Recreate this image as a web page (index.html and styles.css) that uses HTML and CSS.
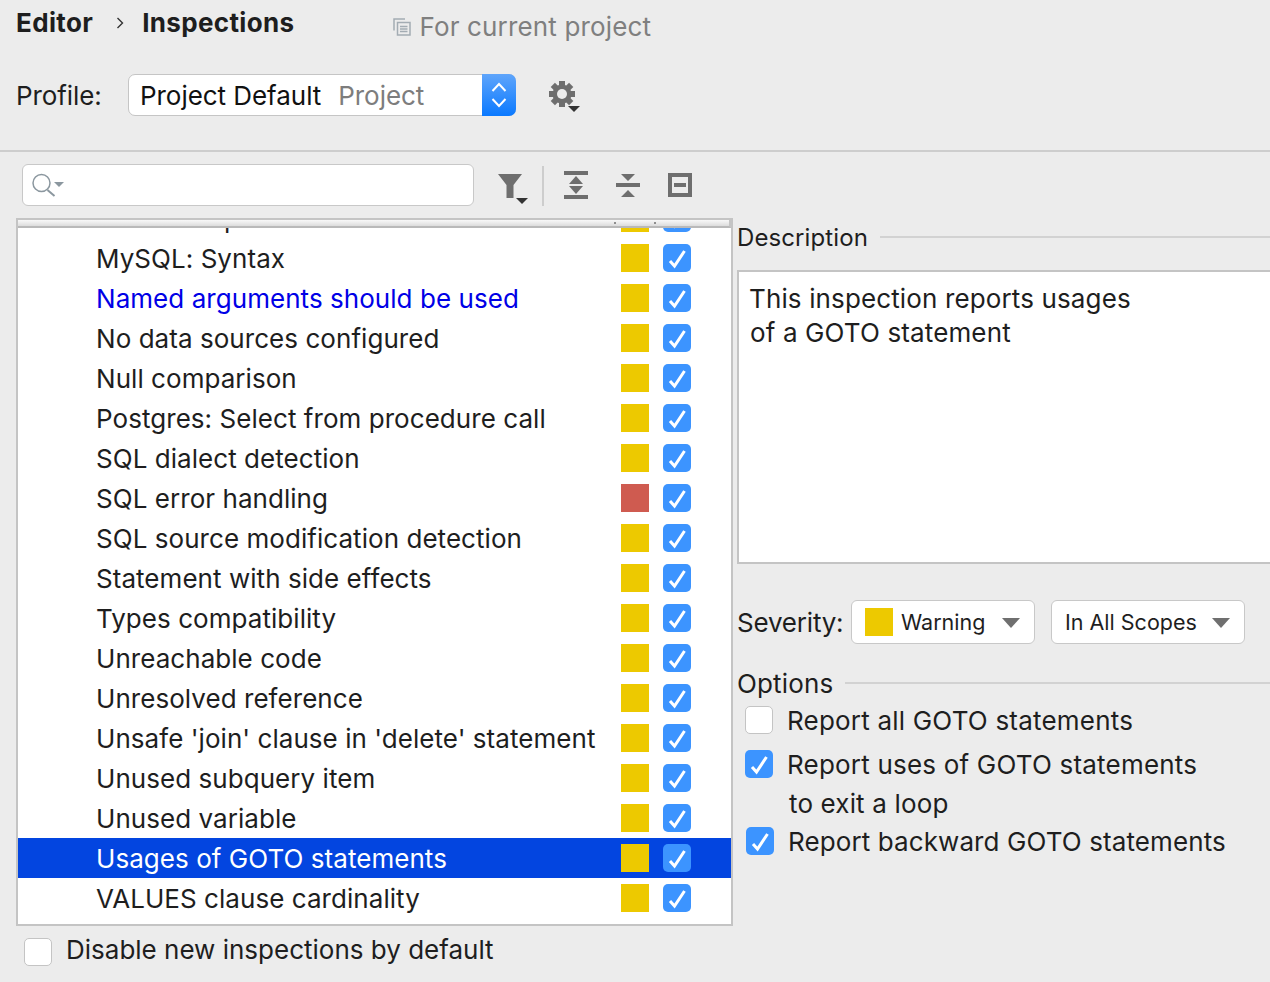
FILE: index.html
```html
<!DOCTYPE html>
<html lang="en">
  <head>
    <meta charset="UTF-8" />
    <title>Inspections</title>
    <link rel="stylesheet" href="styles.css">
  </head>

  <body>
    <svg class="defs" width="0" height="0">
      <symbol id="tick" viewBox="0 0 28 28">
        <path d="M7 17l4.500 5L21.500 7" fill="none" stroke="#fff" stroke-width="3" />
      </symbol>
    </svg>

    <header class="crumbs">
      <span class="crumb">Editor</span>
      <svg class="crumb-arrow" width="8" height="14" viewBox="0 0 8 14"><path d="M1.500 2l5 5-5 5" fill="none" stroke="#333" stroke-width="1.400" /></svg>
      <span class="crumb">Inspections</span>
      <span class="scope">
        <svg width="18" height="18" viewBox="0 0 18 18"><path d="M1 12.500V1h11M4.500 4.500h12.500v12.500h-12.500zM7 8.500h7.500M7 11h7.500M7 13.500h7.500" fill="none" stroke="#a3acb3" stroke-width="1.500" /></svg>
        For current project
      </span>
    </header>

    <div class="profile">
      <span class="profile-label">Profile:</span>
      <div class="select">
        <span class="select-name">Project Default</span>
        <span class="select-kind">Project</span>
        <span class="select-arrows">
          <svg width="16" height="30" viewBox="0 0 16 30"><path d="M1.500 11L8 4l6.500 7M1.500 19L8 26l6.500-7" fill="none" stroke="#fff" stroke-width="2" /></svg>
        </span>
      </div>
      <svg class="gear" width="34" height="36" viewBox="0 0 34 36">
        <g fill="#6e6e6e">
          <circle cx="14" cy="16" r="9.500" />
          <path d="M11 3h6v6h-6z" />
          <path d="M11 23h6v6h-6z" />
          <path d="M1 13h6v6H1zM21 13h6v6h-6z" />
          <path d="M11 3h6v6h-6z" transform="rotate(45 14 16)" />
          <path d="M11 3h6v6h-6z" transform="rotate(135 14 16)" />
          <path d="M11 3h6v6h-6z" transform="rotate(225 14 16)" />
          <path d="M11 3h6v6h-6z" transform="rotate(315 14 16)" />
        </g>
        <circle cx="14" cy="16" r="5" fill="#ececec" />
        <path d="M20 28h12l-6 6z" fill="#333" />
      </svg>
    </div>

    <div class="rule"></div>

    <div class="toolbar">
      <div class="search">
        <svg width="36" height="28" viewBox="0 0 36 28"><circle cx="10.500" cy="12" r="8.500" fill="none" stroke="#8b979f" stroke-width="1.500" /><path d="M16.500 19l7 6" stroke="#8b979f" stroke-width="2" /><path d="M23 11h10l-5 5z" fill="#8b979f" /></svg>
      </div>
      <svg class="tool-filter" width="36" height="40" viewBox="0 0 36 40">
        <path d="M2 5h24l-8.500 11v13h-7V16z" fill="#6e6e6e" />
        <path d="M20 29h12l-6 6z" fill="#333" />
      </svg>
      <span class="tool-sep"></span>
      <svg class="tool" width="24" height="28" viewBox="0 0 24 28">
        <path d="M0 0h24v4H0zM0 24h24v4H0zM12 5l7 8H5zM12 23l7-8H5z" fill="#6e6e6e" />
      </svg>
      <svg class="tool" width="24" height="28" viewBox="0 0 24 28">
        <path d="M0 12h24v4H0zM12 10L5 3h14zM12 19l7 7H5z" fill="#6e6e6e" />
      </svg>
      <svg class="tool" width="24" height="24" viewBox="0 0 24 24">
        <path d="M2 2h20v20H2zM6 12h12" fill="none" stroke="#6e6e6e" stroke-width="4" />
      </svg>
    </div>

    <main class="panels">
      <section class="left">
        <div class="tree">
          <div class="tree-strip"><i></i><i></i></div>
          <div class="rows" id="rows"></div>
        </div>
        <label class="disable-row">
          <span class="box"></span>
          <span class="disable-text">Disable new inspections by default</span>
        </label>
      </section>

      <section class="right">
        <div class="group-title desc-title">Description <span class="group-line"></span></div>
        <div class="desc">
          <p>This inspection reports usages</p>
          <p class="desc-second">of a GOTO statement</p>
        </div>

        <div class="severity">
          <span class="severity-label">Severity:</span>
          <div class="combo combo-warning">
            <span class="swatch"></span>
            Warning
            <span class="caret"></span>
          </div>
          <div class="combo combo-scope">
            In All Scopes
            <span class="caret"></span>
          </div>
        </div>

        <div class="group-title options-title">Options <span class="group-line"></span></div>
        <div class="opt opt-first"><span class="box"></span><span class="opt-text">Report all GOTO statements</span></div>
        <div class="opt opt-second"><span class="box box-on"><svg width="28" height="28"><use href="#tick" /></svg></span><span class="opt-text">Report uses of GOTO statements</span></div>
        <div class="opt-wrap">to exit a loop</div>
        <div class="opt opt-third"><span class="box box-on"><svg width="28" height="28"><use href="#tick" /></svg></span><span class="opt-text">Report backward GOTO statements</span></div>
      </section>
    </main>

    <script>
      const items = [
        ["Misuse of parallel clauses"],
        ["MySQL: Syntax"],
        ["Named arguments should be used", "link"],
        ["No data sources configured"],
        ["Null comparison"],
        ["Postgres: Select from procedure call"],
        ["SQL dialect detection"],
        ["SQL error handling", "error"],
        ["SQL source modification detection"],
        ["Statement with side effects"],
        ["Types compatibility"],
        ["Unreachable code"],
        ["Unresolved reference"],
        ["Unsafe 'join' clause in 'delete' statement"],
        ["Unused subquery item"],
        ["Unused variable"],
        ["Usages of GOTO statements", "selected"],
        ["VALUES clause cardinality"]
      ];

      const rows = document.querySelector("#rows");
      rows.innerHTML = items.map(([name, kind]) => `
        <div class="row ${kind || ""}">
          <span class="row-name">${name}</span>
          <span class="sev"></span>
          <span class="box box-on"><svg width="28" height="28"><use href="#tick" /></svg></span>
        </div>`).join("");
    </script>
  </body>
</html>
```

FILE: styles.css
```css
html,
body {
  height: 100%;
  margin: 0;
  padding: 0;
}

body {
  width: 1270px;
  height: 982px;
  overflow: hidden;
  background: #ececec;
  color: #1e1e1e;
  font-family: Inter, "Liberation Sans", sans-serif;
  font-size: 26px;
}

.defs {
  position: absolute;
}

.crumbs {
  height: 46px;
  padding-left: 16px;
  display: flex;
  align-items: flex-start;
}

.crumb {
  font-weight: 700;
  line-height: 46px;
  letter-spacing: 0.35px;
}

.crumb-arrow {
  margin: 16px 18px 0 23px;
}

.scope {
  margin-left: 99px;
  padding-top: 9px;
  line-height: 36px;
  color: #7f7f7f;
  letter-spacing: 0.15px;
  display: flex;
  align-items: center;
  gap: 8px;
}

.profile {
  height: 42px;
  margin-top: 28px;
  padding-left: 16px;
  display: flex;
  align-items: center;
}

.profile-label {
  width: 112px;
  letter-spacing: -0.1px;
}

.select {
  width: 388px;
  height: 42px;
  box-sizing: border-box;
  border: 1px solid #c5c5c5;
  border-radius: 7px;
  background: #fff;
  display: flex;
  align-items: center;
  padding-left: 11px;
  color: #111;
  letter-spacing: -0.05px;
}

.select-kind {
  margin-left: 17px;
  color: #7d7d7d;
}

.select-arrows {
  margin: -1px -1px -1px auto;
  align-self: stretch;
  width: 34px;
  border-radius: 0 7px 7px 0;
  background: linear-gradient(#5fa5fb, #0a79ff);
  display: flex;
  align-items: center;
  justify-content: center;
}

.gear {
  margin-left: 32px;
  margin-top: 2px;
}

.rule {
  height: 2px;
  margin-top: 34px;
  background: #cdcdcd;
}

.toolbar {
  height: 42px;
  margin-top: 12px;
  padding-left: 22px;
  display: flex;
  align-items: center;
}

.search {
  width: 452px;
  height: 42px;
  box-sizing: border-box;
  border: 1px solid #c8c8c8;
  border-radius: 6px;
  background: #fff;
  display: flex;
  align-items: center;
  padding-left: 8px;
}

.tool-filter {
  margin-left: 22px;
  margin-top: 8px;
}

.tool-sep {
  width: 2px;
  height: 40px;
  margin: 2px 20px 0 10px;
  background: #cdcdcd;
}

.tool + .tool {
  margin-left: 28px;
}

.panels {
  margin-top: 12px;
  padding-left: 16px;
  display: flex;
  gap: 4px;
}

.left {
  width: 717px;
  flex-shrink: 0;
}

.tree {
  height: 708px;
  box-sizing: border-box;
  border: 2px solid #c4c4c4;
  background: #fff;
  overflow: hidden;
  position: relative;
}

.tree-strip {
  position: absolute;
  top: 0;
  left: 0;
  right: 0;
  height: 6px;
  background: linear-gradient(#f8f8f8, #dcdcdc);
  border-bottom: 2px solid #b9b9b9;
  border-right: 2px solid #c4c4c4;
  z-index: 1;
}

.tree-strip i {
  position: absolute;
  top: 2px;
  left: 596px;
  width: 2px;
  height: 2px;
  background: #8f8f8f;
}

.tree-strip i + i {
  left: 636px;
}

.rows {
  margin-top: -22px;
}

.row {
  height: 40px;
  padding-left: 78px;
  display: flex;
  align-items: center;
  letter-spacing: 0.05px;
}

.row-name {
  width: 525px;
  white-space: nowrap;
}

.link .row-name {
  color: #0000e6;
}

.sev {
  width: 28px;
  height: 28px;
  background: #edc900;
}

.error .sev {
  background: #cf5b50;
}

.row .box {
  margin-left: 14px;
}

.selected {
  background: #0345e0;
  color: #fff;
}

.box {
  width: 28px;
  height: 28px;
  border-radius: 5px;
  background: #fff;
  border: 1px solid #c4c4c4;
  box-sizing: border-box;
  flex-shrink: 0;
  display: block;
}

.box-on {
  background: #3c94ff;
  border: none;
}

.box svg {
  display: block;
}

.disable-row {
  margin: 8px 0 0 8px;
  display: flex;
  align-items: center;
  gap: 14px;
}

.disable-text {
  padding-bottom: 4px;
}

.right {
  flex-grow: 1;
  min-width: 0;
}

.group-title {
  display: flex;
  align-items: center;
  gap: 12px;
  height: 36px;
  white-space: nowrap;
  letter-spacing: 0.15px;
}

.desc-title {
  height: 38px;
  font-size: 24px;
  letter-spacing: 0.1px;
}

.group-line {
  flex-grow: 1;
  height: 2px;
  background: #d2d2d2;
}

.desc {
  margin-top: 14px;
  height: 294px;
  box-sizing: border-box;
  border: 2px solid #c4c4c4;
  border-right: none;
  background: #fff;
  padding: 10px 0 0 10px;
  letter-spacing: 0.13px;
}

.desc p {
  margin: 0;
  line-height: 34px;
}

.desc-second {
  padding-left: 1px;
}

.severity {
  height: 44px;
  margin-top: 36px;
  display: flex;
  align-items: center;
}

.severity-label {
  width: 114px;
  letter-spacing: -0.2px;
}

.combo {
  height: 44px;
  box-sizing: border-box;
  border: 1px solid #c8c8c8;
  border-radius: 6px;
  background: #fff;
  display: flex;
  align-items: center;
  padding-left: 13px;
  position: relative;
  font-size: 21.500px;
}

.combo-warning {
  width: 184px;
  gap: 8px;
}

.combo-scope {
  width: 194px;
  margin-left: 16px;
}

.swatch {
  width: 28px;
  height: 28px;
  background: #edc900;
}

.caret {
  position: absolute;
  right: 14px;
  top: 17px;
  border-left: 9px solid transparent;
  border-right: 9px solid transparent;
  border-top: 10px solid #6f6f6f;
}

.options-title {
  margin-top: 21px;
}

.opt {
  display: flex;
  align-items: center;
  gap: 14px;
  padding-left: 8px;
  height: 28px;
  letter-spacing: 0.2px;
}

.opt-text {
  padding-bottom: 0;
}

.opt-first {
  margin-top: 5px;
}

.opt-second {
  margin-top: 16px;
}

.opt-wrap {
  padding-left: 52px;
  line-height: 36px;
  margin-top: 8px;
  letter-spacing: 0.15px;
}

.opt-third {
  margin-top: 5px;
  padding-left: 9px;
  letter-spacing: 0.1px;
}
```
